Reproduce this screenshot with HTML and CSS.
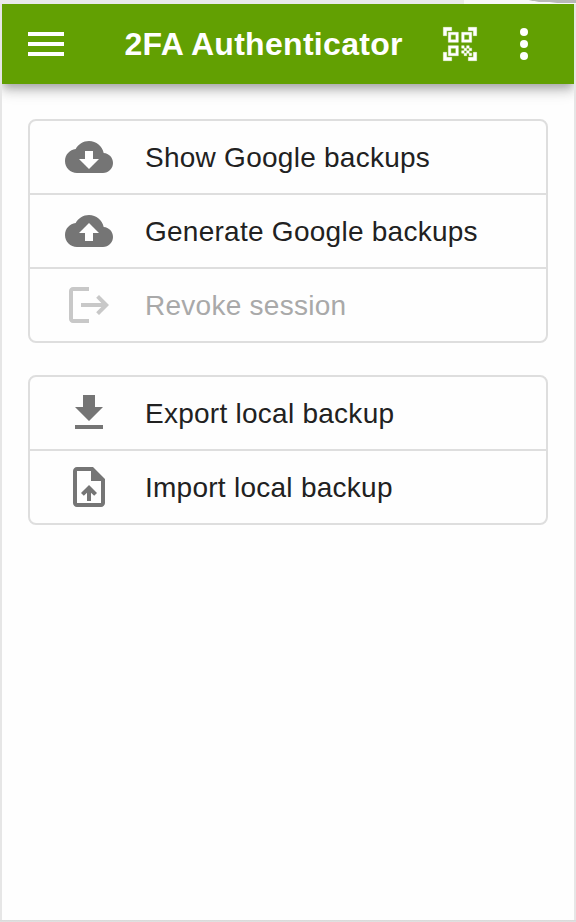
FILE: index.html
```html
<!DOCTYPE html>
<html lang="en">
<head>
<meta charset="utf-8">
<title>2FA Authenticator</title>
<link rel="stylesheet" href="styles.css">
</head>
<body>
<div class="app">
  <header class="bar">
    <svg class="icon menu" viewBox="0 0 24 24"><path d="M3 18h18v-2H3v2zm0-5h18v-2H3v2zm0-7v2h18V6H3z"/></svg>
    <h1 class="title">2FA Authenticator</h1>
    <svg class="icon scan" viewBox="0 0 24 24"><path d="M9.5 6.5v3h-3v-3h3M11 5H5v6h6V5zm-1.5 9.5v3h-3v-3h3M11 13H5v6h6v-6zm6.5-6.5v3h-3v-3h3M19 5h-6v6h6V5zm-6 8h1.5v1.5H13V13zm1.5 1.5H16V16h-1.5v-1.5zM16 13h1.5v1.5H16V13zm-3 3h1.5v1.5H13V16zm1.5 1.5H16V19h-1.5v-1.5zM16 16h1.5v1.5H16V16zm1.5-1.5H19V16h-1.5v-1.5zm0 3H19V19h-1.5v-1.5zM22 7h-2V4h-3V2h5v5zm0 15v-5h-2v3h-3v2h5zM2 22h5v-2H4v-3H2v5zM2 2v5h2V4h3V2H2z"/></svg>
    <svg class="icon more" viewBox="0 0 24 24"><circle cx="12" cy="6" r="2"/><circle cx="12" cy="12" r="2"/><circle cx="12" cy="18" r="2"/></svg>
  </header>
  <main class="content">
    <ul class="list">
      <li class="row"><svg class="icon" viewBox="0 0 24 24"><path d="M19.35 10.04C18.67 6.59 15.64 4 12 4 9.11 4 6.6 5.64 5.35 8.04 2.34 8.36 0 10.91 0 14c0 3.31 2.69 6 6 6h13c2.76 0 5-2.24 5-5 0-2.64-2.05-4.78-4.65-4.96zM17 13l-5 5-5-5h3V9h4v4h3z"/></svg><span class="label">Show Google backups</span></li>
      <li class="row"><svg class="icon" viewBox="0 0 24 24"><path d="M19.35 10.04C18.67 6.59 15.64 4 12 4 9.11 4 6.6 5.64 5.35 8.04 2.34 8.36 0 10.91 0 14c0 3.31 2.69 6 6 6h13c2.76 0 5-2.24 5-5 0-2.64-2.05-4.78-4.65-4.96zM14 13v4h-4v-4H7l5-5 5 5h-3z"/></svg><span class="label">Generate Google backups</span></li>
      <li class="row disabled"><svg class="icon" viewBox="0 0 24 24"><path d="M17 7l-1.41 1.41L18.17 11H8v2h10.17l-2.58 2.58L17 17l5-5zM4 5h8V3H4c-1.1 0-2 .9-2 2v14c0 1.1.9 2 2 2h8v-2H4V5z"/></svg><span class="label">Revoke session</span></li>
    </ul>
    <ul class="list">
      <li class="row"><svg class="icon" viewBox="0 0 24 24"><path d="M19 9h-4V3H9v6H5l7 7 7-7zM5 18v2h14v-2H5z"/></svg><span class="label">Export local backup</span></li>
      <li class="row"><svg class="icon" viewBox="0 0 24 24"><path d="M14 2H6c-1.1 0-1.99.9-1.99 2L4 20c0 1.1.89 2 1.99 2H18c1.1 0 2-.9 2-2V8l-6-6zm4 18H6V4h7v5h5v11zM8 15.01l1.41 1.41L11 14.84V19h2v-4.16l1.59 1.59L16 15.01 12.01 11z"/></svg><span class="label">Import local backup</span></li>
    </ul>
  </main>
</div>
</body>
</html>
```
FILE: styles.css
```css
* { box-sizing: border-box; }

body {
  margin: 0;
  height: 922px;
  padding: 4px 2px 2px;
  overflow: hidden;
  background:
    radial-gradient(ellipse 48px 3px at 576px 0, #b8b8b8 92%, transparent) no-repeat,
    linear-gradient(90deg, #e9e9e9 464px, #f8f8f8 464px) 0 0 / 100% 4px no-repeat,
    linear-gradient(#d8d8d8, #e2e2e2) 0 100% / 100% 2px no-repeat,
    #e6e6e6;
  font-family: "Liberation Sans", Arial, sans-serif;
}

.app {
  height: 916px;
  background: #fefefe;
  overflow: hidden;
}

.bar {
  display: flex;
  align-items: center;
  height: 80px;
  padding: 0 26px 0 20px;
  background: #62a002;
  color: #fff;
  box-shadow: 0 4px 8px -2px rgba(0, 0, 0, .2), 0 8px 10px rgba(0, 0, 0, .14), 0 2px 20px rgba(0, 0, 0, .12);
}

.title {
  margin: 0 0 0 54.5px;
  flex: 1;
  font-size: 32px;
  line-height: 48px;
  font-weight: 700;
  letter-spacing: .3px;
  white-space: nowrap;
}

.icon {
  flex: none;
  width: 48px;
  height: 48px;
  fill: currentColor;
}

.scan {
  width: 40px;
  height: 40px;
  margin-right: 20px;
  stroke: currentColor;
  stroke-width: .25;
}

.content {
  display: flex;
  flex-direction: column;
  gap: 32px;
  padding: 35px 26px;
}

.list {
  margin: 0;
  padding: 0;
  list-style: none;
  border: 2px solid #dedede;
  border-radius: 8px;
}

.row {
  display: flex;
  align-items: center;
  gap: 32px;
  height: 74px;
  padding-left: 35px;
  border-bottom: 2px solid #dedede;
  color: #212121;
  font-size: 28px;
  letter-spacing: .26px;
}

.row:last-child {
  height: 72px;
  border-bottom: 0;
}

.label { padding-top: 2px; }

.row .icon { color: #757575; }

.disabled { color: #a9a9a9; }
.disabled .icon { color: #c8c8c8; }
```
